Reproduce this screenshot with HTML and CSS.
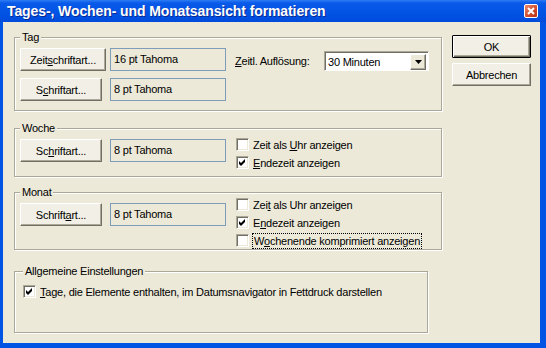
FILE: index.html
```html
<!DOCTYPE html>
<html lang="de">
<head>
    <meta charset="UTF-8">
    <title>Tages-, Wochen- und Monatsansicht formatieren</title>
    <link rel="stylesheet" href="styles.css">
</head>
<body>
    <div class="window">
        <div class="titlebar">
            <span class="title">Tages-, Wochen- und Monatsansicht formatieren</span>
            <div class="close-btn">
                <svg width="8" height="8" viewBox="0 0 8 8"><path d="M1 1 L7 7 M7 1 L1 7" stroke="#fff" stroke-width="2"/></svg>
            </div>
        </div>

        <div class="dialog">
            <div class="groups">
                <!-- Tag -->
                <fieldset class="group group-tag">
                    <legend>Tag</legend>
                    <div class="tag-grid">
                        <button class="btn btn-wide">Zeit<u>s</u>chriftart...</button>
                        <div class="font-field">16 pt Tahoma</div>
                        <div class="res-label"><u>Z</u>eitl. Auflösung:</div>
                        <div class="combo">
                            <span class="combo-text">30 Minuten</span>
                            <span class="combo-arrow">
                                <svg width="7" height="4" viewBox="0 0 7 4"><path d="M0 0 H7 L3.5 4 Z" fill="#000"/></svg>
                            </span>
                        </div>
                        <button class="btn">S<u>c</u>hriftart...</button>
                        <div class="font-field">8 pt Tahoma</div>
                    </div>
                </fieldset>

                <!-- Woche -->
                <fieldset class="group group-week">
                    <legend>Woche</legend>
                    <div class="group-row">
                        <div class="font-pair">
                            <button class="btn">Sc<u>h</u>riftart...</button>
                            <div class="font-field">8 pt Tahoma</div>
                        </div>
                        <div class="checks">
                            <div class="check"><span class="cb"></span><span class="check-label">Zeit als <u>U</u>hr anzeigen</span></div>
                            <div class="check"><span class="cb"><svg width="7" height="7" viewBox="0 0 7 7"><path d="M0 2 L2 4 L6 0 V3 L2 7 L0 5 Z" fill="#000"/></svg></span><span class="check-label"><u>E</u>ndezeit anzeigen</span></div>
                        </div>
                    </div>
                </fieldset>

                <!-- Monat -->
                <fieldset class="group group-month">
                    <legend>Monat</legend>
                    <div class="group-row">
                        <div class="font-pair">
                            <button class="btn">Schrift<u>a</u>rt...</button>
                            <div class="font-field">8 pt Tahoma</div>
                        </div>
                        <div class="checks">
                            <div class="check"><span class="cb"></span><span class="check-label">Zei<u>t</u> als Uhr anzeigen</span></div>
                            <div class="check"><span class="cb"><svg width="7" height="7" viewBox="0 0 7 7"><path d="M0 2 L2 4 L6 0 V3 L2 7 L0 5 Z" fill="#000"/></svg></span><span class="check-label">E<u>n</u>dezeit anzeigen</span></div>
                            <div class="check"><span class="cb"></span><span class="check-label focus">W<u>o</u>chenende komprimiert anzeigen</span></div>
                        </div>
                    </div>
                </fieldset>

                <!-- Allgemeine Einstellungen -->
                <fieldset class="group group-general">
                    <legend>Allgemeine Einstellungen</legend>
                    <div class="check"><span class="cb"><svg width="7" height="7" viewBox="0 0 7 7"><path d="M0 2 L2 4 L6 0 V3 L2 7 L0 5 Z" fill="#000"/></svg></span><span class="check-label"><u>T</u>age, die Elemente enthalten, im Datumsnavigator in Fettdruck darstellen</span></div>
                </fieldset>
            </div>

            <div class="actions">
                <button class="btn btn-action btn-default">OK</button>
                <button class="btn btn-action">Abbrechen</button>
            </div>
        </div>
    </div>
</body>
</html>
```

FILE: styles.css
```css
:root {
    --face: #ece9d8;
    --btn-face: #f1efe6;
    --shadow: #aca899;
    --dark-shadow: #716f64;
    --xp-blue: #0054e3;
}

* {
    margin: 0;
    padding: 0;
    box-sizing: border-box;
}

body {
    width: 546px;
    height: 348px;
    overflow: hidden;
    font-family: 'Liberation Sans', Arial, sans-serif;
    font-size: 11px;
    letter-spacing: -0.22px;
    color: #000;
}

u {
    text-decoration: underline;
    text-underline-offset: 1px;
}

/* Fenster */
.window {
    width: 546px;
    height: 348px;
    display: flex;
    flex-direction: column;
    background: var(--xp-blue);
    padding: 0 6px 5px 3px;
}

.titlebar {
    height: 22px;
    margin: 0 -6px 0 -3px;
    padding: 0 7px;
    display: flex;
    align-items: center;
    justify-content: space-between;
    background: linear-gradient(#2e7cf4 0, #0a5ae9 3px, #0053e4 60%, #004bdc 100%);
}

.title {
    color: #fff;
    font-weight: bold;
    font-size: 14px;
    text-shadow: 1px 1px #0b2a8f;
    letter-spacing: -0.1px;
}

.close-btn {
    width: 14px;
    height: 14px;
    margin-right: 1px;
    border: 1px solid #fff;
    border-radius: 2px;
    background: linear-gradient(135deg, #e98a6d, #d2482a 60%, #b8321a);
    display: grid;
    place-items: center;
}

.dialog {
    flex: 1;
    background: var(--face);
    display: flex;
    padding: 10px 9px 0 11px;
    gap: 10px;
}

.groups {
    width: 428px;
    display: flex;
    flex-direction: column;
}

/* Gruppenrahmen */
.group {
    border: 1px solid var(--shadow);
    box-shadow: inset 1px 1px #fff, 1px 1px #fff;
    padding: 0 5px 9px;
    min-inline-size: 0;
}

.group legend {
    line-height: 11px;
    padding: 0 2px;
    background: var(--face);
}

.group-week { margin-top: 12px; padding-bottom: 7px; }
.group-month { margin-top: 10px; padding-bottom: 2px; }
.group-general { margin-top: 16px; width: 414px; height: 67px; padding-left: 8px; }

.group-general .check { margin-top: 8px; }

.tag-grid {
    display: grid;
    grid-template-columns: 86px 116px 90px 105px;
    grid-template-rows: 23px 23px;
    column-gap: 4px;
    row-gap: 7px;
    margin-top: 5px;
}

.font-pair {
    display: grid;
    grid-template-columns: 86px 116px;
    column-gap: 4px;
    margin-top: 5px;
    align-self: flex-start;
}

.group-row {
    display: flex;
    gap: 10px;
}

.group-week .checks { margin-top: 4px; }

/* Schaltflächen */
.btn {
    height: 23px;
    width: 82px;
    font: inherit;
    letter-spacing: inherit;
    color: #000;
    background: var(--btn-face);
    border: 1px solid;
    border-color: #fff var(--dark-shadow) var(--dark-shadow) #fff;
    box-shadow: inset -1px -1px var(--shadow);
    border-radius: 1px;
}

.btn-wide { width: 86px; }

.font-field {
    height: 23px;
    border: 1px solid #7f9db9;
    padding-left: 3px;
    line-height: 21px;
}

.res-label {
    padding-left: 5px;
    line-height: 20px;
    align-self: end;
}

.combo {
    height: 20px;
    align-self: end;
    display: flex;
    align-items: center;
    background: #fff;
    border: 1px solid;
    border-color: var(--shadow) #fff #fff var(--shadow);
    box-shadow: inset 1px 1px var(--dark-shadow);
    padding: 2px 2px 1px 3px;
}

.combo-text {
    flex: 1;
    padding-top: 1px;
}

.combo-arrow {
    width: 16px;
    height: 16px;
    background: var(--face);
    border: 1px solid;
    border-color: #fff var(--dark-shadow) var(--dark-shadow) #fff;
    box-shadow: inset -1px -1px var(--shadow);
    display: grid;
    place-items: center;
}

/* Kontrollkästchen */
.checks {
    display: flex;
    flex-direction: column;
    gap: 5px;
}

.check {
    display: flex;
    align-items: center;
    height: 13px;
    gap: 4px;
    white-space: nowrap;
}

.cb {
    width: 13px;
    height: 13px;
    flex: none;
    background: #fff;
    border: 1px solid;
    border-color: var(--shadow) #fff #fff var(--shadow);
    box-shadow: inset 1px 1px var(--dark-shadow), inset -1px -1px var(--face);
    display: grid;
    place-items: center;
}

.focus {
    outline: 1px dotted #000;
    padding: 0 1px;
    line-height: 14px;
}

/* Aktionen */
.actions {
    display: flex;
    flex-direction: column;
    gap: 5px;
    padding-top: 3px;
}

.btn-action { width: 79px; }

.btn-default {
    border: 1px solid #000;
    box-shadow: inset 1px 1px #fff, inset -1px -1px var(--dark-shadow), inset -2px -2px var(--shadow);
}
```
